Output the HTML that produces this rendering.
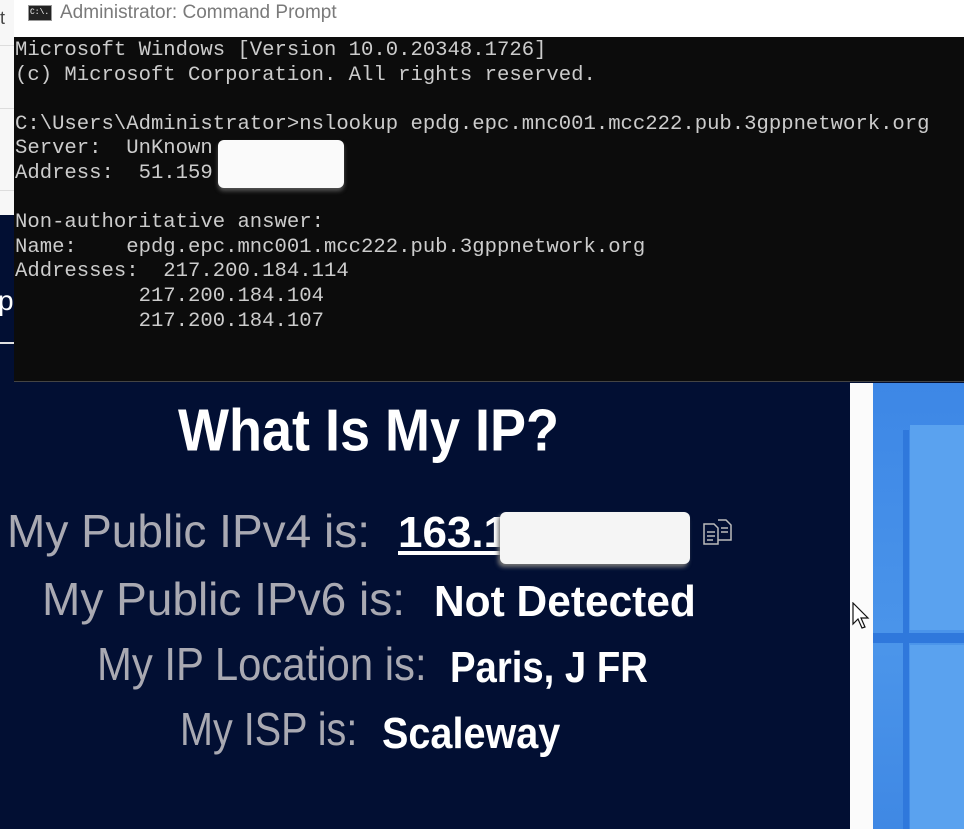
<!DOCTYPE html>
<html><head><meta charset="utf-8"><style>
*{margin:0;padding:0;box-sizing:border-box}
body{width:964px;height:829px;overflow:hidden;position:relative;background:#020f33;font-family:"Liberation Sans",sans-serif}
.abs{position:absolute}
.mono{font-family:"Liberation Mono",monospace;font-size:20.6px;color:#cccccc;white-space:pre;line-height:24.6px}
.lab{position:absolute;color:#a9a9b2;font-size:46px;white-space:nowrap;line-height:1;transform-origin:left top}
.val{position:absolute;color:#fff;font-weight:bold;font-size:44px;white-space:nowrap;line-height:1;transform-origin:left top}
</style></head><body>
<div class="abs" style="left:0;top:0;width:14px;height:215px;background:#f7f7f7"></div>
<div class="abs" style="left:0;top:45px;width:14px;height:1px;background:#ddd"></div>
<div class="abs" style="left:0;top:108px;width:14px;height:1px;background:#ddd"></div>
<div class="abs" style="left:0;top:190px;width:14px;height:1px;background:#ddd"></div>
<div class="abs" style="left:0;top:8px;font-size:18px;color:#444">t</div>
<div class="abs" style="left:-2px;top:285px;font-size:28px;color:#fff">p</div>
<div class="abs" style="left:0;top:342px;width:14px;height:2px;background:#e0e0e0"></div>
<div class="abs" style="left:14px;top:0;width:950px;height:37px;background:#fff"></div>
<div class="abs" style="left:28px;top:5px;width:24px;height:16px;background:#222;border:1px solid #999"><div style="color:#fff;font-size:8px;font-family:'Liberation Mono';line-height:14px;padding-left:1px">C:\.</div></div>
<div class="abs" style="left:60px;top:2px;font-size:19px;color:#7a7a7a">Administrator: Command Prompt</div>
<div class="abs" style="left:14px;top:37px;width:950px;height:345px;background:#0c0c0c;border-bottom:1px solid #444"></div>
<div class="abs mono" style="left:15px;top:39px">Microsoft Windows [Version 10.0.20348.1726]
(c) Microsoft Corporation. All rights reserved.

C:\Users\Administrator>nslookup epdg.epc.mnc001.mcc222.pub.3gppnetwork.org
Server:  UnKnown
Address:  51.159

Non-authoritative answer:
Name:    epdg.epc.mnc001.mcc222.pub.3gppnetwork.org
Addresses:  217.200.184.114
          217.200.184.104
          217.200.184.107</div>
<div class="abs" style="left:218px;top:140px;width:126px;height:48px;background:#fafafa;border-radius:6px;box-shadow:0 3px 4px #555"></div>
<div class="abs" style="left:850px;top:383px;width:23px;height:446px;background:#fbfbfb"></div>
<div class="abs" style="left:873px;top:383px;width:91px;height:446px;background:linear-gradient(180deg,#3d87e6,#4b95ea 60%,#3f88e4)"></div>
<div class="abs" style="left:903px;top:430px;width:6px;height:399px;background:#2f78dc"></div>
<div class="abs" style="left:873px;top:633px;width:91px;height:10px;background:#2f78dc"></div>
<div class="abs" style="left:910px;top:425px;width:54px;height:205px;background:#5aa2ef"></div>
<div class="abs" style="left:910px;top:645px;width:54px;height:184px;background:#5aa2ef"></div>
<svg class="abs" style="left:852px;top:602px" width="20" height="30" viewBox="0 0 20 30"><path d="M1 1 L1 22 L6 17 L10 26 L13 25 L9 16 L16 16 Z" fill="#fff" stroke="#111" stroke-width="1.2"/></svg>
<div class="abs" style="left:178px;top:401px;color:#fff;font-weight:bold;font-size:54px;line-height:1;white-space:nowrap;transform:scaleY(1.1);transform-origin:left top">What Is My IP?</div>
<div class="lab" style="left:7px;top:508px">My Public IPv4 is:</div>
<div class="val" style="left:398px;top:511px;text-decoration:underline;text-underline-offset:4px">163.17</div>
<div class="abs" style="left:500px;top:512px;width:190px;height:52px;background:#f5f5f5;border-radius:6px;box-shadow:-2px 3px 4px #777"></div>
<svg class="abs" style="left:702px;top:518px" width="32" height="32" viewBox="0 0 32 32" fill="none" stroke="#bbb" stroke-width="1.5"><path d="M2 6h10l4 4v16H2z M5 14h8 M5 18h8 M5 22h6"/><path d="M16 2h8l5 5v15h-13"/><path d="M19 10h7 M19 14h7"/></svg>
<div class="lab" style="left:42px;top:576px">My Public IPv6 is:</div>
<div class="val" style="left:434px;top:580px;transform:scaleX(0.965)">Not Detected</div>
<div class="lab" style="left:97px;top:641px;transform:scaleX(0.91)">My IP Location is:</div>
<div class="val" style="left:450px;top:646px;transform:scaleX(0.87)">Paris, J FR</div>
<div class="lab" style="left:180px;top:706px;transform:scaleX(0.86)">My ISP is:</div>
<div class="val" style="left:382px;top:712px;transform:scaleX(0.9)">Scaleway</div>
</body></html>
